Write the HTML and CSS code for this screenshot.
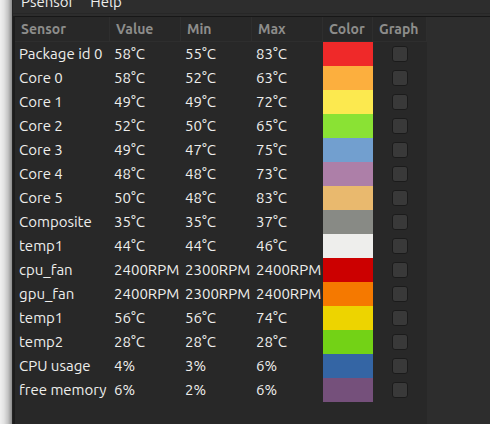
FILE: index.html
```
<!DOCTYPE html>
<html lang="en">
<head>
<meta charset="utf-8">
<title>Psensor</title>
<link rel="stylesheet" href="styles.css">
</head>
<body>
<main class="window">
  <nav class="menubar">
    <button type="button">Psensor</button>
    <button type="button">Help</button>
  </nav>
  <section class="panes">
    <div class="list">
      <table>
        <colgroup><col class="name"><col class="num"><col class="num"><col class="num"><col class="color"><col class="graph"></colgroup>
        <thead><tr><th>Sensor</th><th>Value</th><th>Min</th><th>Max</th><th>Color</th><th>Graph</th></tr></thead>
        <tbody>
          <tr><td>Package id 0</td><td>58°C</td><td>55°C</td><td>83°C</td><td class="red"></td><td><input type="checkbox" aria-label="Graph Package id 0"></td></tr>
          <tr><td>Core 0</td><td>58°C</td><td>52°C</td><td>63°C</td><td class="apricot"></td><td><input type="checkbox" aria-label="Graph Core 0"></td></tr>
          <tr><td>Core 1</td><td>49°C</td><td>49°C</td><td>72°C</td><td class="yellow"></td><td><input type="checkbox" aria-label="Graph Core 1"></td></tr>
          <tr><td>Core 2</td><td>52°C</td><td>50°C</td><td>65°C</td><td class="lime"></td><td><input type="checkbox" aria-label="Graph Core 2"></td></tr>
          <tr><td>Core 3</td><td>49°C</td><td>47°C</td><td>75°C</td><td class="sky"></td><td><input type="checkbox" aria-label="Graph Core 3"></td></tr>
          <tr><td>Core 4</td><td>48°C</td><td>48°C</td><td>73°C</td><td class="plum"></td><td><input type="checkbox" aria-label="Graph Core 4"></td></tr>
          <tr><td>Core 5</td><td>50°C</td><td>48°C</td><td>83°C</td><td class="sand"></td><td><input type="checkbox" aria-label="Graph Core 5"></td></tr>
          <tr><td>Composite</td><td>35°C</td><td>35°C</td><td>37°C</td><td class="grey"></td><td><input type="checkbox" aria-label="Graph Composite"></td></tr>
          <tr><td>temp1</td><td>44°C</td><td>44°C</td><td>46°C</td><td class="white"></td><td><input type="checkbox" aria-label="Graph temp1"></td></tr>
          <tr><td>cpu_fan</td><td>2400RPM</td><td>2300RPM</td><td>2400RPM</td><td class="scarlet"></td><td><input type="checkbox" aria-label="Graph cpu_fan"></td></tr>
          <tr><td>gpu_fan</td><td>2400RPM</td><td>2300RPM</td><td>2400RPM</td><td class="orange"></td><td><input type="checkbox" aria-label="Graph gpu_fan"></td></tr>
          <tr><td>temp1</td><td>56°C</td><td>56°C</td><td>74°C</td><td class="butter"></td><td><input type="checkbox" aria-label="Graph temp1"></td></tr>
          <tr><td>temp2</td><td>28°C</td><td>28°C</td><td>28°C</td><td class="green"></td><td><input type="checkbox" aria-label="Graph temp2"></td></tr>
          <tr><td>CPU usage</td><td>4%</td><td>3%</td><td>6%</td><td class="blue"></td><td><input type="checkbox" aria-label="Graph CPU usage"></td></tr>
          <tr><td>free memory</td><td>6%</td><td>2%</td><td>6%</td><td class="purple"></td><td><input type="checkbox" aria-label="Graph free memory"></td></tr>
        </tbody>
      </table>
    </div>
  </section>
</main>
</body>
</html>
```
FILE: styles.css
```
* { box-sizing: border-box; }

body {
  margin: 0;
  min-height: 100vh;
  padding-left: 12px;
  background: linear-gradient(to right, #f0f0f0 0, #e2e2e2 4px, #c4c4c4 8px, #8c8c8c 12px);
  color: #eeeeec;
  font: 15px/24px "Ubuntu", "Noto Sans", sans-serif;
}

.window {
  display: flex;
  flex-direction: column;
  min-height: 100vh;
  border-left: 1px solid #242424;
  background: #2d2d2d;
}

.menubar {
  display: flex;
  align-items: flex-end;
  height: 14px;
  overflow: hidden;
  border-bottom: 1px solid #272727;
}

.menubar button {
  padding: 0 8px;
  border: 0;
  background: none;
  color: inherit;
  font: inherit;
  line-height: 22px;
}

.panes {
  flex: 1;
  display: flex;
  margin-top: 2px;
  border-top: 1px solid #171717;
  border-left: 2px solid #1c1c1c;
}

.list { background: #282828; }

table {
  width: 412px;
  table-layout: fixed;
  border-collapse: separate;
  border-spacing: 0;
}

.name { width: 95px; }
.num { width: 71px; }
.color { width: 50px; }
.graph { width: 54px; }

th {
  height: 25px;
  padding: 0 0 0 6px;
  border-right: 1px solid #2e2e2e;
  border-bottom: 1px solid #2e2e2e;
  color: #8d8d8b;
  font-size: 14px;
  font-weight: 600;
  text-align: left;
}

td {
  height: 24px;
  padding: 0 0 0 4px;
  white-space: nowrap;
}

td:last-child {
  padding: 0;
  text-align: center;
}

input {
  appearance: none;
  display: block;
  width: 16px;
  height: 16px;
  margin: 0 auto;
  border: 1px solid #1b1b1b;
  border-radius: 3px;
  background: #393939;
}

.red { background: #ef2929; }
.apricot { background: #fcaf3e; }
.yellow { background: #fce94f; }
.lime { background: #8ae234; }
.sky { background: #729fcf; }
.plum { background: #ad7fa8; }
.sand { background: #e9b96e; }
.grey { background: #888a85; }
.white { background: #eeeeec; }
.scarlet { background: #cc0000; }
.orange { background: #f57900; }
.butter { background: #edd400; }
.green { background: #73d216; }
.blue { background: #3465a4; }
.purple { background: #75507b; }
```
